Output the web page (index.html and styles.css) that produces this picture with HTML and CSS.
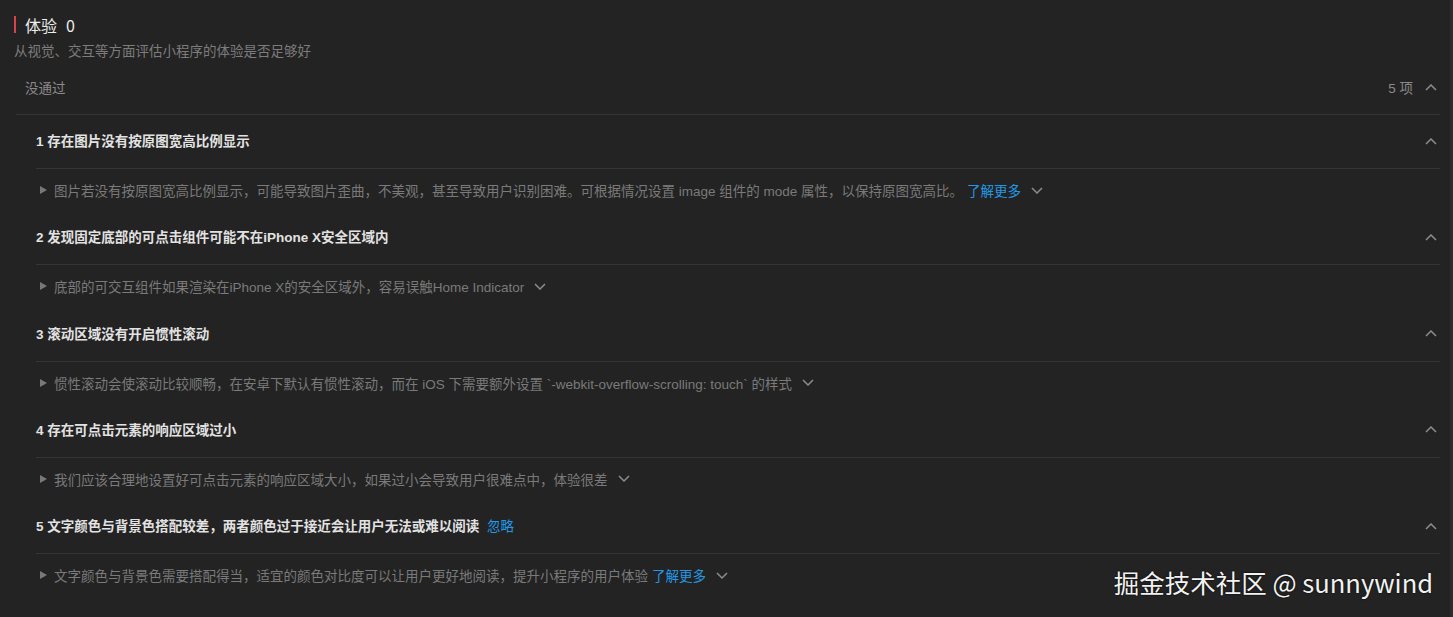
FILE: index.html
```html
<!DOCTYPE html>
<html>
<head>
    <title>体验</title>
    <link rel="stylesheet" href="styles.css">
</head>
<body>
    <div class="page">
        <div class="section-head">
            <span class="mark"></span>
            <span class="section-title">体验</span>
            <span class="score">0</span>
        </div>
        <p class="section-desc">从视觉、交互等方面评估小程序的体验是否足够好</p>

        <div class="group">
            <div class="group-head">
                <span class="group-name">没通过</span>
                <span class="group-count">5 项</span>
                <svg class="chev" width="12" height="7" viewBox="0 0 12 7"><polyline points="1,6 6,1 11,6"/></svg>
            </div>

            <div class="item">
                <div class="item-head">
                    <span class="item-title">1 存在图片没有按原图宽高比例显示</span>
                    <svg class="chev" width="12" height="7" viewBox="0 0 12 7"><polyline points="1,6 6,1 11,6"/></svg>
                </div>
                <div class="item-body">
                    <span class="tri"></span>
                    <span class="item-text">图片若没有按原图宽高比例显示，可能导致图片歪曲，不美观，甚至导致用户识别困难。可根据情况设置 image 组件的 mode 属性，以保持原图宽高比。</span>
                    <a class="link" href="#">了解更多</a>
                    <svg class="chev-down" width="12" height="7" viewBox="0 0 12 7"><polyline points="1,1 6,6 11,1"/></svg>
                </div>
            </div>

            <div class="item">
                <div class="item-head">
                    <span class="item-title">2 发现固定底部的可点击组件可能不在iPhone X安全区域内</span>
                    <svg class="chev" width="12" height="7" viewBox="0 0 12 7"><polyline points="1,6 6,1 11,6"/></svg>
                </div>
                <div class="item-body">
                    <span class="tri"></span>
                    <span class="item-text">底部的可交互组件如果渲染在iPhone X的安全区域外，容易误触Home Indicator</span>
                    <svg class="chev-down" width="12" height="7" viewBox="0 0 12 7"><polyline points="1,1 6,6 11,1"/></svg>
                </div>
            </div>

            <div class="item">
                <div class="item-head">
                    <span class="item-title">3 滚动区域没有开启惯性滚动</span>
                    <svg class="chev" width="12" height="7" viewBox="0 0 12 7"><polyline points="1,6 6,1 11,6"/></svg>
                </div>
                <div class="item-body">
                    <span class="tri"></span>
                    <span class="item-text">惯性滚动会使滚动比较顺畅，在安卓下默认有惯性滚动，而在 iOS 下需要额外设置 `-webkit-overflow-scrolling: touch` 的样式</span>
                    <svg class="chev-down" width="12" height="7" viewBox="0 0 12 7"><polyline points="1,1 6,6 11,1"/></svg>
                </div>
            </div>

            <div class="item">
                <div class="item-head">
                    <span class="item-title">4 存在可点击元素的响应区域过小</span>
                    <svg class="chev" width="12" height="7" viewBox="0 0 12 7"><polyline points="1,6 6,1 11,6"/></svg>
                </div>
                <div class="item-body">
                    <span class="tri"></span>
                    <span class="item-text">我们应该合理地设置好可点击元素的响应区域大小，如果过小会导致用户很难点中，体验很差</span>
                    <svg class="chev-down" width="12" height="7" viewBox="0 0 12 7"><polyline points="1,1 6,6 11,1"/></svg>
                </div>
            </div>

            <div class="item">
                <div class="item-head">
                    <span class="item-title">5 文字颜色与背景色搭配较差，两者颜色过于接近会让用户无法或难以阅读 <a class="link" href="#">忽略</a></span>
                    <svg class="chev" width="12" height="7" viewBox="0 0 12 7"><polyline points="1,6 6,1 11,6"/></svg>
                </div>
                <div class="item-body">
                    <span class="tri"></span>
                    <span class="item-text">文字颜色与背景色需要搭配得当，适宜的颜色对比度可以让用户更好地阅读，提升小程序的用户体验</span>
                    <a class="link" href="#">了解更多</a>
                    <svg class="chev-down" width="12" height="7" viewBox="0 0 12 7"><polyline points="1,1 6,6 11,1"/></svg>
                </div>
            </div>
        </div>
    </div>

    <div class="watermark">掘金技术社区 @ sunnywind</div>
</body>
</html>
```

FILE: styles.css
```css
html, body {
    margin: 0;
    height: 100%;
    overflow: hidden;
}
body {
    background: #232323;
    border-right: 3px solid #2c2c2c;
    box-sizing: border-box;
    font-family: "Liberation Sans", "Noto Sans CJK SC", sans-serif;
    font-size: 13.5px;
    color: #8a8a8a;
    position: relative;
}
.page {
    padding: 15px 10px 0 14px;
}
.section-head {
    display: flex;
    align-items: center;
    height: 20px;
    font-family: "Noto Sans CJK SC", sans-serif;
}
.mark {
    width: 2px;
    height: 17px;
    background: #d6434c;
    margin: 0 9px 1px 0;
}
.section-title {
    font-size: 16px;
    color: #ececec;
}
.score {
    font-size: 16px;
    color: #ececec;
    margin-left: 9px;
}
.section-desc {
    margin: 5px 0 0;
    line-height: 20px;
    color: #7c7c7c;
    font-family: "Noto Sans CJK SC", sans-serif;
}
.group {
    margin: 2px 0 0 2px;
}
.group-head {
    display: flex;
    align-items: center;
    height: 50px;
    padding: 0 3px 2px 9px;
    border-bottom: 1px solid #353535;
}
.group-name {
    flex: 1;
    color: #8a8a8a;
}
.group-count {
    color: #8a8a8a;
    margin-right: 12px;
}
.chev polyline, .chev-down polyline {
    fill: none;
    stroke: #8c8c8c;
    stroke-width: 1.5;
}
.item {
    margin-left: 20px;
}
.item-head {
    display: flex;
    align-items: center;
    height: 50px;
    padding: 0 3px 3px 0;
    border-bottom: 1px solid #353535;
}
.item-head .chev {
    margin-top: 2px;
}
.item-title {
    flex: 1;
    color: #e2e2e2;
    font-weight: 600;
}
.item-title .link {
    font-weight: 400;
}
.item-body {
    display: flex;
    align-items: center;
    height: 42.25px;
    padding-left: 4px;
}
.tri {
    width: 0;
    height: 0;
    border-left: 7px solid #787878;
    border-top: 4px solid transparent;
    border-bottom: 4px solid transparent;
    margin-right: 7px;
}
.item-text {
    color: #7a7a7a;
}
.link {
    color: #2299e6;
    text-decoration: none;
    margin-left: 4px;
}
.chev-down {
    margin-left: 10px;
}
.watermark {
    position: absolute;
    right: 17px;
    top: 564px;
    font-family: "Noto Sans CJK SC", sans-serif;
    font-size: 25.5px;
    line-height: 36px;
    color: #f2f2f2;
    text-shadow: 0 0 2px #000;
}
```
